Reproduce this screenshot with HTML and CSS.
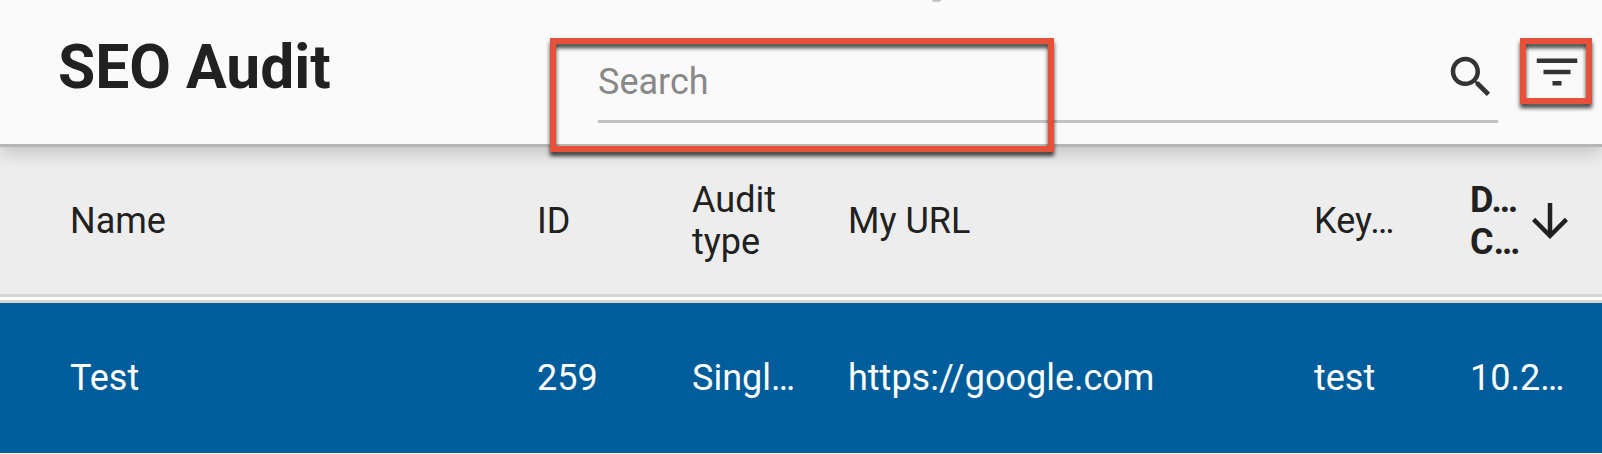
FILE: index.html
```html
<!DOCTYPE html>
<html lang="en">
<head>
    <meta charset="UTF-8">
    <title>SEO Audit</title>
    <link rel="stylesheet" href="styles.css">
</head>
<body>
    <header class="toolbar">
        <div class="speck"></div>
        <h1 class="title">SEO Audit</h1>
        <div class="search-field">
            <input class="search-input" type="text" placeholder="Search">
        </div>
        <svg class="icon icon-search" viewBox="0 0 24 24"><path d="M15.5 14h-.79l-.28-.27C15.41 12.59 16 11.11 16 9.5 16 5.91 13.09 3 9.5 3S3 5.91 3 9.5 5.91 16 9.5 16c1.61 0 3.09-.59 4.23-1.57l.27.28v.79l5 4.99L20.49 19l-4.99-5zm-6 0C7.01 14 5 11.99 5 9.5S7.01 5 9.5 5 14 7.01 14 9.5 11.99 14 9.5 14z"/></svg>
        <svg class="icon icon-filter" viewBox="0 0 24 24"><path d="M10 18h4v-2h-4v2zM3 6v2h18V6H3zm3 7h12v-2H6v2z"/></svg>
        <!-- Red annotation boxes drawn over the toolbar -->
        <div class="mark mark-search"></div>
        <div class="mark mark-filter"></div>
    </header>

    <table class="audit-table">
        <thead>
            <tr>
                <th class="col-name">Name</th>
                <th class="col-id">ID</th>
                <th class="col-type">Audit<br>type</th>
                <th class="col-url">My URL</th>
                <th class="col-key">Key…</th>
                <th class="col-date">
                    <div class="sorted">
                        <span class="sorted-label">D…<br>C…</span>
                        <svg class="icon icon-sort" viewBox="0 0 24 24"><path d="M20 12l-1.41-1.41L13 16.17V4h-2v12.17l-5.58-5.6L4 12l8 8 8-8z"/></svg>
                    </div>
                </th>
            </tr>
        </thead>
        <tbody>
            <tr class="selected">
                <td>Test</td>
                <td>259</td>
                <td>Singl…</td>
                <td>https://google.com</td>
                <td>test</td>
                <td>10.2…</td>
            </tr>
        </tbody>
    </table>
</body>
</html>
```

FILE: styles.css
```css
html, body {
    height: 100%;
}
body {
    font-family: Roboto, "Liberation Sans", sans-serif;
    background-color: #fff;
    color: #212121;
    margin: 0;
    overflow: hidden;
}
.toolbar {
    position: relative;
    z-index: 1;
    display: flex;
    align-items: flex-start;
    box-sizing: border-box;
    height: 147px;
    padding-left: 58px;
    background-color: #fafafa;
    border-bottom: 3px solid #b5b5b5;
    box-shadow: 0 4px 18px rgba(0, 0, 0, 0.22);
}
.speck {
    position: absolute;
    top: -2px;
    left: 932px;
    width: 9px;
    height: 4px;
    border-radius: 50%;
    background-color: #c4c4c4;
}
.title {
    width: 540px;
    margin: 36px 0 0;
    font-size: 60.5px;
    font-weight: 700;
    line-height: 64px;
}
.search-field {
    width: 900px;
    margin-top: 52px;
    border-bottom: 3px solid #c2c2c2;
}
.search-input {
    display: block;
    box-sizing: border-box;
    width: 100%;
    height: 68px;
    padding: 0 0 8px;
    border: none;
    outline: none;
    background: transparent;
    font-family: inherit;
    font-size: 36px;
    color: #212121;
}
.search-input::placeholder {
    color: #888;
    opacity: 1;
}
.icon {
    display: block;
    flex-shrink: 0;
    width: 54px;
    height: 54px;
    fill: #333;
}
.icon-search {
    margin: 50px 0 0 -54px;
}
.icon-filter {
    margin: 45px 0 0 32px;
}
.mark {
    position: absolute;
    box-sizing: border-box;
    top: 38px;
    border: 6px solid #e8503a;
    filter: drop-shadow(0 4px 2px rgba(0, 0, 0, 0.75));
}
.mark-search {
    left: 550px;
    width: 504px;
    height: 114px;
}
.mark-filter {
    left: 1520px;
    width: 72px;
    height: 66px;
}
.audit-table {
    width: 100%;
    margin-top: -3px;
    table-layout: fixed;
    border-collapse: separate;
    border-spacing: 0 3px;
    font-size: 36px;
}
.audit-table th,
.audit-table td {
    box-sizing: border-box;
    padding: 0;
    text-align: left;
    font-weight: 400;
    white-space: nowrap;
    overflow: hidden;
}
.audit-table th {
    height: 150px;
    line-height: 42px;
    background-color: #ededed;
    border-bottom: 3px solid #d5d5d5;
}
.audit-table td {
    height: 153px;
    border-top: 3px solid #d5d5d5;
}
.audit-table .col-name,
.audit-table td:first-child {
    padding-left: 70px;
}
.selected {
    background-color: #005d9c;
    color: #fff;
}
.col-name {
    width: 537px;
}
.col-id {
    width: 155px;
}
.col-type {
    width: 156px;
}
.col-url {
    width: 466px;
}
.col-key {
    width: 156px;
}
.sorted {
    display: flex;
    align-items: center;
}
.audit-table .sorted-label {
    width: 53px;
    font-weight: 700;
}
.icon-sort {
    fill: #212121;
}
```
